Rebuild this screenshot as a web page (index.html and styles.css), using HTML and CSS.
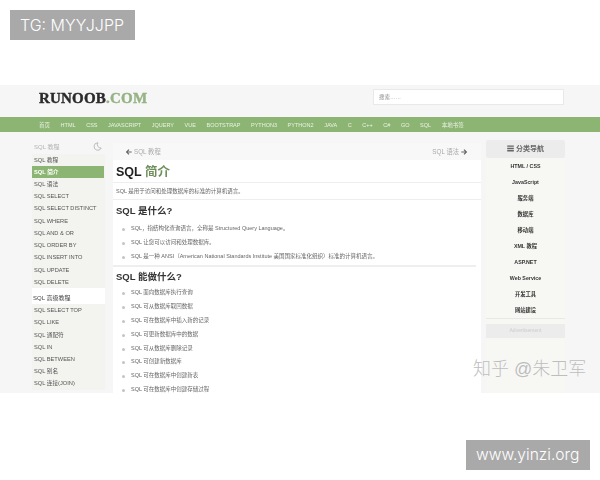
FILE: index.html
```html
<!DOCTYPE html>
<html lang="zh">
<head>
<meta charset="utf-8">
<title>SQL 简介</title>
<link rel="stylesheet" href="styles.css">
</head>
<body>
<div class="tag tag-top">TG: MYYJJPP</div>
<div class="shot">
  <div class="frame">
    <header class="head">
      <div class="logo">RUNOOB<span>.COM</span></div>
      <div class="search">搜索……</div>
    </header>
    <nav class="nav">
      <a>首页</a><a>HTML</a><a>CSS</a><a>JAVASCRIPT</a><a>JQUERY</a><a>VUE</a><a>BOOTSTRAP</a><a>PYTHON3</a><a>PYTHON2</a><a>JAVA</a><a>C</a><a>C++</a><a>C#</a><a>GO</a><a>SQL</a><a>本地书签</a>
    </nav>
    <div class="cols">
      <aside class="side">
        <div class="side-title"><span>SQL 教程</span>
          <svg class="moon" viewBox="0 0 12 12" width="9" height="9"><path d="M6.5 1a5 5 0 1 0 4.5 7A4.6 4.6 0 0 1 6.5 1z" fill="none" stroke="#aaa" stroke-width="1"/></svg>
        </div>
        <ul class="side-list">
          <li>SQL 教程</li><li class="on">SQL 简介</li><li>SQL 语法</li><li>SQL SELECT</li><li>SQL SELECT DISTINCT</li><li>SQL WHERE</li><li>SQL AND &amp; OR</li><li>SQL ORDER BY</li><li>SQL INSERT INTO</li><li>SQL UPDATE</li><li>SQL DELETE</li>
        </ul>
        <div class="side-sub">SQL 高级教程</div>
        <ul class="side-list">
          <li>SQL SELECT TOP</li><li>SQL LIKE</li><li>SQL 通配符</li><li>SQL IN</li><li>SQL BETWEEN</li><li>SQL 别名</li><li>SQL 连接(JOIN)</li>
        </ul>
      </aside>
      <main class="main">
        <div class="pager">
          <span class="pg"><svg class="arrow" viewBox="0 0 10 10" width="6" height="6"><path d="M5 1 1 5l4 4M1.5 5H9.5" fill="none" stroke="#666" stroke-width="2"/></svg>SQL 教程</span>
          <span class="pg">SQL 语法<svg class="arrow" viewBox="0 0 10 10" width="6" height="6"><path d="M5 1l4 4-4 4M8.5 5H.5" fill="none" stroke="#666" stroke-width="2"/></svg></span>
        </div>
        <h1>SQL <em>简介</em></h1>
        <p class="intro">SQL 是用于访问和处理数据库的标准的计算机语言。</p>
        <h2>SQL 是什么?</h2>
        <ul class="bul first">
          <li>SQL，指结构化查询语言，全称是 Structured Query Language。</li>
          <li>SQL 让您可以访问和处理数据库。</li>
          <li>SQL 是一种 ANSI（American National Standards Institute 美国国家标准化组织）标准的计算机语言。</li>
        </ul>
        <div class="thick"></div>
        <h2>SQL 能做什么?</h2>
        <ul class="bul">
          <li>SQL 面向数据库执行查询</li>
          <li>SQL 可从数据库取回数据</li>
          <li>SQL 可在数据库中插入新的记录</li>
          <li>SQL 可更新数据库中的数据</li>
          <li>SQL 可从数据库删除记录</li>
          <li>SQL 可创建新数据库</li>
          <li>SQL 可在数据库中创建新表</li>
          <li>SQL 可在数据库中创建存储过程</li>
        </ul>
      </main>
      <aside class="right">
        <div class="right-head">☰ 分类导航</div>
        <ul class="right-list">
          <li>HTML / CSS</li><li>JavaScript</li><li>服务端</li><li>数据库</li><li>移动端</li><li>XML 教程</li><li>ASP.NET</li><li>Web Service</li><li>开发工具</li><li>网站建设</li>
        </ul>
        <div class="ad">Advertisement</div>
      </aside>
    </div>
  </div>
  <div class="mark">知乎 @朱卫军</div>
</div>
<div class="tag tag-bottom">www.yinzi.org</div>
</body>
</html>
```
FILE: styles.css
```css
* { box-sizing: border-box; }
html, body { margin: 0; padding: 0; }
body {
  width: 600px;
  height: 480px;
  overflow: hidden;
  background: #fff;
  display: flex;
  flex-direction: column;
  font-family: "Liberation Sans", "Noto Sans CJK SC", sans-serif;
}
ul { list-style: none; margin: 0; padding: 0; }
.tag {
  height: 30px;
  line-height: 30px;
  background: #a9a9a9;
  color: #fff;
  font-family: Inter, sans-serif;
  font-weight: 300;
  font-size: 16px;
  flex: none;
  white-space: nowrap;
}
.tag-top { width: 125px; margin: 10px 0 0 10px; padding-left: 10px; }
.tag-bottom { width: 124px; margin: 47px 0 0 466px; padding-left: 10px; font-size: 15.6px; }
.shot { position: relative; margin-top: 45px; height: 308px; flex: none; overflow: hidden; }
.frame { height: 308px; background: #f6f6f6; filter: blur(.45px); overflow: hidden; }
.head { height: 32px; display: flex; justify-content: space-between; padding: 4px 36px 0 39px; }
.logo {
  font-family: "Liberation Serif", serif;
  font-weight: 700;
  font-size: 15px;
  line-height: 18px;
  letter-spacing: .2px;
  color: #2b2b2b;
  -webkit-text-stroke: .4px currentColor;
}
.logo span { color: #96b384; }
.search {
  width: 191px;
  height: 16px;
  background: #fff;
  border: 1px solid #e9e9e9;
  font-size: 5.5px;
  line-height: 15px;
  padding-left: 5px;
  color: #888;
}
.nav {
  height: 15px;
  background: #8cb573;
  display: flex;
  gap: 10.6px;
  padding-left: 39px;
  color: #eaf2e4;
  font-size: 5.5px;
  line-height: 16px;
}
.cols { display: flex; align-items: flex-start; padding-left: 32px; }
.side { width: 73px; flex: none; margin-top: 8px; font-size: 5.7px; color: #555; }
.side-title {
  height: 13.5px;
  padding: 0 2px;
  display: flex;
  justify-content: space-between;
  align-items: center;
  color: #b4b4b4;
  font-size: 6px;
}
.moon { margin-right: 1px; }
.side-list { background: #f3f3f0; }
.side-list li { height: 12.24px; line-height: 12.24px; padding-left: 2px; white-space: nowrap; overflow: hidden; }
.side-list .on { background: #8cb573; color: #fff; font-weight: 700; margin-right: 1px; }
.side-sub { height: 16px; line-height: 21px; background: #fff; padding-left: 1px; font-size: 6px; color: #444; }
.main {
  width: 368px;
  height: 253px;
  flex: none;
  margin: 11px 0 0 8px;
  background: #fff;
  font-size: 5.5px;
  color: #666;
  overflow: hidden;
}
.pager {
  height: 17px;
  background: #f8f8f8;
  display: flex;
  justify-content: space-between;
  padding: 0 14px 0 13px;
  line-height: 17px;
  font-size: 6.3px;
  color: #aaa;
}
.pg { display: flex; align-items: center; gap: 2px; }
.arrow { flex: none; }
h1 { margin: 0; padding: 5px 0 0 3px; height: 23px; font-size: 12.5px; line-height: 15px; color: #222; font-weight: 700; border-bottom: 1px solid #eee; }
h1 em { font-style: normal; color: #6f8f5c; }
.intro { margin: 0; padding-left: 3px; height: 17px; line-height: 16px; border-bottom: 1px solid #eee; white-space: nowrap; }
h2 { margin: 0; height: 20px; padding: 4px 0 0 3px; font-size: 9.5px; line-height: 13px; color: #333; font-weight: 700; }
.bul { padding-left: 18px; }
.bul li { position: relative; height: 13.8px; line-height: 13.8px; white-space: nowrap; }
.bul li::before {
  content: "";
  position: absolute;
  left: -9px;
  top: 6px;
  width: 3px;
  height: 3px;
  border-radius: 50%;
  background: #c4c4c4;
}
.bul.first { margin-top: 2px; }
.thick { height: 2px; background: #eee; margin: 2px 5px 0 0; }
.thick + h2 { height: 19px; padding-top: 3px; }
.right { width: 79px; flex: none; margin: 8px 0 0 5px; background: #f7f7f4; height: 256px; }
.right-head {
  height: 18px;
  background: #ececec;
  border-radius: 2px;
  text-align: center;
  font-size: 7px;
  font-weight: 700;
  line-height: 17px;
  color: #666;
}
.right-list {
  border-bottom: 1px solid #e8e8e8;
  text-align: center;
  font-size: 5.3px;
  font-weight: 700;
  color: #333;
  margin-bottom: 5px;
}
.right-list li { height: 16px; line-height: 16px; }
.ad { height: 14px; background: #ececec; text-align: center; font-size: 5px; line-height: 13px; color: #ccc; }
.mark {
  position: absolute;
  left: 473px;
  top: 272px;
  font-size: 18px;
  line-height: 24px;
  color: #bdbdbd;
  white-space: nowrap;
  font-weight: 300;
  text-shadow: 0 0 1px #fff;
}
```
